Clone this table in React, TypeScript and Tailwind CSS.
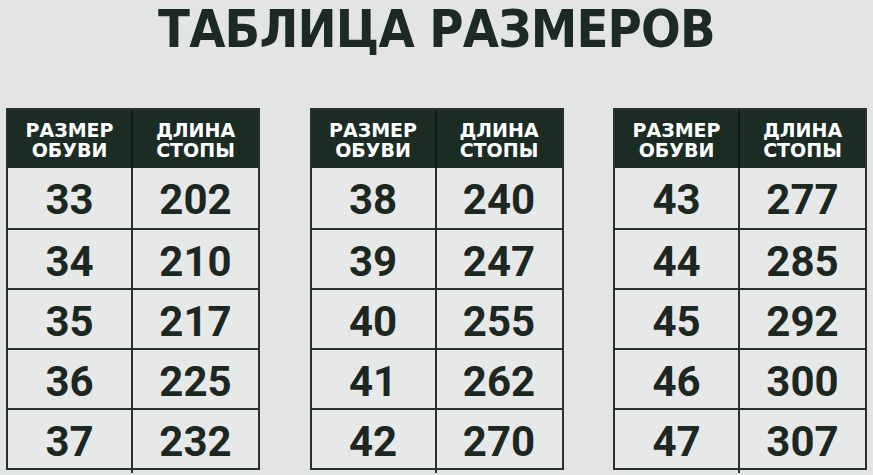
const tables = [
  [
    ["33", "202"],
    ["34", "210"],
    ["35", "217"],
    ["36", "225"],
    ["37", "232"],
  ],
  [
    ["38", "240"],
    ["39", "247"],
    ["40", "255"],
    ["41", "262"],
    ["42", "270"],
  ],
  [
    ["43", "277"],
    ["44", "285"],
    ["45", "292"],
    ["46", "300"],
    ["47", "307"],
  ],
];

function SizeTable({ rows }: { rows: string[][] }) {
  return (
    <div className="w-[254px] border-2 border-[#2b302d] bg-[#e7e9e8]">
      {/* Header */}
      <div className="grid grid-cols-2 h-[58px] bg-[#1b2c24] text-white font-['DejaVu_Sans',sans-serif] font-bold text-[19px] leading-[20px] text-center">
        <div className="flex flex-col items-center justify-center border-r-2 border-[#0f1713] pt-[2px]">
          <span>РАЗМЕР</span>
          <span>ОБУВИ</span>
        </div>
        <div className="flex flex-col items-center justify-center pt-[2px]">
          <span>ДЛИНА</span>
          <span>СТОПЫ</span>
        </div>
      </div>
      {/* Rows */}
      {rows.map(([size, len], i) => (
        <div
          key={size}
          className={`grid grid-cols-2 h-[60px] text-[#1d2722] font-['Roboto',sans-serif] font-bold text-[42px] text-center ${i > 0 ? "border-t-2 border-[#2b302d]" : ""}`}
        >
          <div className="flex items-center justify-center border-r-2 border-[#2b302d]">{size}</div>
          <div className="flex items-center justify-center">{len}</div>
        </div>
      ))}
    </div>
  );
}

export default function App() {
  return (
    <div className="w-[873px] h-[475px] bg-[#e3e5e4] overflow-hidden flex flex-col">
      <div className="h-[108px] flex justify-center">
        <h1 className="whitespace-nowrap text-center font-['DejaVu_Sans',sans-serif] [font-stretch:condensed] font-bold text-[52px] leading-[58px] tracking-[-0.8px] text-[#1d2a23]">
          ТАБЛИЦА РАЗМЕРОВ
        </h1>
      </div>
      <div className="flex justify-between px-[6px]">
        {tables.map((rows, i) => (
          <SizeTable key={i} rows={rows} />
        ))}
      </div>
    </div>
  );
}
